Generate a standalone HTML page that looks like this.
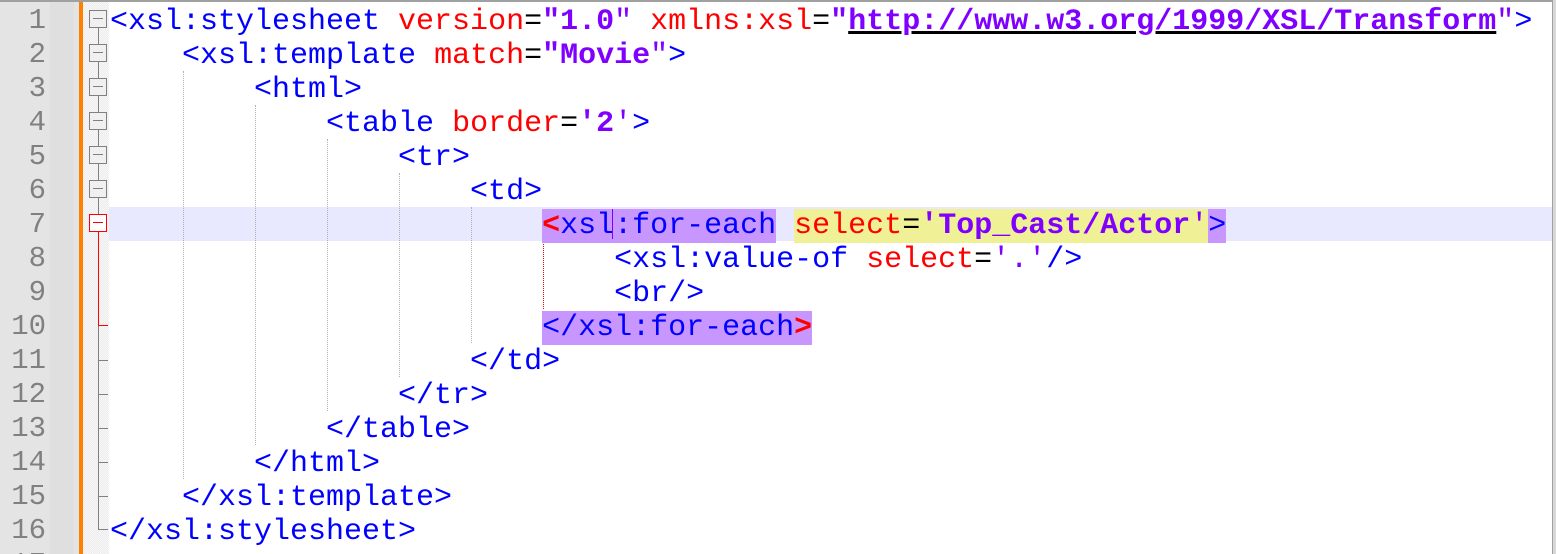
<!DOCTYPE html>
<html style="overflow:hidden;height:554px"><head><meta charset="utf-8"><style>
body{margin:0;width:1556px;height:554px;overflow:hidden;background:#fff;position:relative;font-family:"Liberation Mono",monospace;}
.gut{position:absolute;left:0;top:0;width:79px;height:554px;background:#e4e4e4;}
.gut2{position:absolute;left:50px;top:0;width:24px;height:554px;background:#dfdfdf;}
.or{position:absolute;left:79px;top:0;width:4px;height:554px;background:#ff8000;}
.fm{position:absolute;left:83px;top:0;width:26px;height:554px;background:#ececec;
background-image:linear-gradient(45deg,#f8f8f8 25%,transparent 25%,transparent 75%,#f8f8f8 75%),linear-gradient(45deg,#f8f8f8 25%,transparent 25%,transparent 75%,#f8f8f8 75%);background-size:2px 2px;background-position:0 0,1px 1px;}
.topb{position:absolute;left:0;top:0;width:1556px;height:2px;background:#a0a0a0;}
.rb{position:absolute;right:0;top:0;width:3px;height:554px;background:#d8d8d8;border-left:1px solid #a0a0a0;}
.ln{position:absolute;left:0;width:46px;text-align:right;font-size:29px;color:#808080;font-family:"Liberation Mono",monospace;height:34px;line-height:36px;overflow:hidden;}
.l{position:absolute;left:110px;height:34px;line-height:38px;font-size:30px;white-space:pre;color:#0000ff;overflow:visible;}
.a{color:#ff0000}.e{color:#000}.v{color:#8000ff;font-weight:bold}.q{color:#8000ff}
.hl{position:absolute;left:109px;top:207px;width:1444px;height:34px;background:#e8e8ff;}
.box{position:absolute;left:89px;width:16px;height:16px;border:1px solid #808080;background:#f0f0f0;}
.box:after{content:"";position:absolute;left:3px;right:3px;top:7px;height:1px;background:#808080;}
.vd{position:absolute;width:0;border-left:1px dotted #b0b0b0;}
.p{background:#c896ff}.y{background:#f0f096}
</style></head><body>
<div class="gut"></div><div class="gut2"></div><div class="or"></div><div class="fm"></div>
<div class="hl"></div>
<div class="topb"></div><div class="rb"></div>
<div style="position:absolute;left:98px;top:28px;width:1px;height:186px;background:#808080"></div>
<div style="position:absolute;left:98px;top:232px;width:1px;height:298px;background:#808080"></div>
<div style="position:absolute;left:98px;top:232px;width:1px;height:94px;background:#ff0000"></div>
<div style="position:absolute;left:98px;top:325px;width:10px;height:1px;background:#ff0000"></div>
<div style="position:absolute;left:98px;top:360px;width:10px;height:1px;background:#808080"></div>
<div style="position:absolute;left:98px;top:394px;width:10px;height:1px;background:#808080"></div>
<div style="position:absolute;left:98px;top:428px;width:10px;height:1px;background:#808080"></div>
<div style="position:absolute;left:98px;top:462px;width:10px;height:1px;background:#808080"></div>
<div style="position:absolute;left:98px;top:496px;width:10px;height:1px;background:#808080"></div>
<div style="position:absolute;left:98px;top:529px;width:10px;height:1px;background:#808080"></div>
<div class="box" style="top:10px"></div><div class="box" style="top:44px"></div><div class="box" style="top:78px"></div>
<div class="box" style="top:112px"></div><div class="box" style="top:146px"></div><div class="box" style="top:180px"></div>
<div class="box" style="top:214px;border-color:#ff0000;background:#fff"></div>
<div style="position:absolute;left:93px;top:222px;width:10px;height:1px;background:#ff0000"></div>
<div class="vd" style="left:183px;top:71px;height:408px"></div>
<div class="vd" style="left:255px;top:105px;height:340px"></div>
<div class="vd" style="left:327px;top:139px;height:272px"></div>
<div class="vd" style="left:399px;top:173px;height:204px"></div>
<div class="vd" style="left:471px;top:207px;height:136px"></div>
<div class="vd" style="left:543px;top:241px;height:68px;border-left-color:#ff0000"></div>
<div class="ln" style="top:3px">1</div><div class="ln" style="top:37px">2</div><div class="ln" style="top:71px">3</div><div class="ln" style="top:105px">4</div><div class="ln" style="top:139px">5</div><div class="ln" style="top:173px">6</div><div class="ln" style="top:207px">7</div><div class="ln" style="top:241px">8</div><div class="ln" style="top:275px">9</div><div class="ln" style="top:309px">10</div><div class="ln" style="top:343px">11</div><div class="ln" style="top:377px">12</div><div class="ln" style="top:411px">13</div><div class="ln" style="top:445px">14</div><div class="ln" style="top:479px">15</div><div class="ln" style="top:513px">16</div><div class="ln" style="top:547px;height:7px">17</div>
<div class="l" style="top:3px">&lt;xsl:stylesheet<span class="a"> version</span><span class="e">=</span><span class="v">"1.0</span><span class="q">"</span><span class="a"> xmlns:xsl</span><span class="e">=</span><span class="v">"<span style="text-decoration:underline;text-decoration-color:#000">http://www.w3.org/1999/XSL/Transform</span></span><span class="q">"</span>&gt;</div>
<div class="l" style="top:37px">    &lt;xsl:template<span class="a"> match</span><span class="e">=</span><span class="v">"Movie</span><span class="q">"</span>&gt;</div>
<div class="l" style="top:71px">        &lt;html&gt;</div>
<div class="l" style="top:105px">            &lt;table<span class="a"> border</span><span class="e">=</span><span class="v">'2</span><span class="q">'</span>&gt;</div>
<div class="l" style="top:139px">                &lt;tr&gt;</div>
<div class="l" style="top:173px">                    &lt;td&gt;</div>
<div class="l" style="top:207px">                        <span class="p"><b style="color:#ff0000">&lt;</b>xsl:for-each</span> <span class="y"><span class="a">select</span><span class="e">=</span><span class="v">'Top_Cast/Actor</span><span class="q">'</span></span><span class="p">&gt;</span></div>
<div style="position:absolute;left:612px;top:209px;width:1px;height:30px;background:#8000ff"></div>
<div class="l" style="top:241px">                            &lt;xsl:value-of<span class="a"> select</span><span class="e">=</span><span class="q">'.'</span>/&gt;</div>
<div class="l" style="top:275px">                            &lt;br/&gt;</div>
<div class="l" style="top:309px">                        <span class="p">&lt;/xsl:for-each<b style="color:#ff0000">&gt;</b></span></div>
<div class="l" style="top:343px">                    &lt;/td&gt;</div>
<div class="l" style="top:377px">                &lt;/tr&gt;</div>
<div class="l" style="top:411px">            &lt;/table&gt;</div>
<div class="l" style="top:445px">        &lt;/html&gt;</div>
<div class="l" style="top:479px">    &lt;/xsl:template&gt;</div>
<div class="l" style="top:513px">&lt;/xsl:stylesheet&gt;</div>
</body></html>
